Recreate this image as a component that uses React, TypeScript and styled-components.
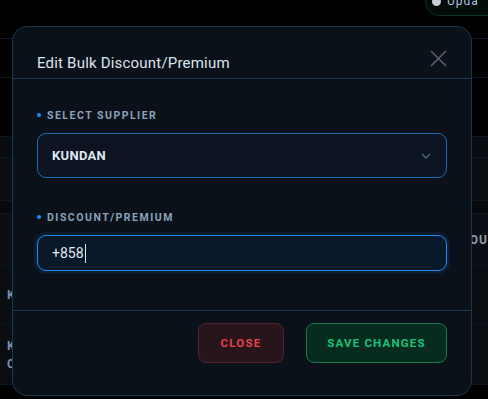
import * as React from "react"
import styled, { createGlobalStyle } from "styled-components"

const GlobalStyle = createGlobalStyle`
  html, body {
    margin: 0;
    padding: 0;
    background: #000;
    font-family: Roboto, "Liberation Sans", sans-serif;
  }
  * { box-sizing: border-box; }
`

const Page = styled.div`
  position: relative;
  width: 488px;
  height: 399px;
  overflow: hidden;
  background: #000;
`

const TopBar = styled.div`
  height: 39px;
  border-bottom: 1px solid #0d1b29;
  display: flex;
  justify-content: flex-end;
  align-items: flex-start;
  overflow: hidden;
`

const StatusPill = styled.div`
  flex: none;
  width: 92px;
  margin-top: -12px;
  margin-right: -29px;
  height: 28px;
  padding: 0 0 7px 6px;
  display: flex;
  align-items: flex-end;
  gap: 6px;
  border: 1px solid #0f3322;
  border-radius: 14px;
  background: #030c08;
  color: #a6c4e2;
  font-size: 12px;
  letter-spacing: 1px;
  white-space: nowrap;
`

const PillDot = styled.span`
  width: 9px;
  height: 9px;
  margin-bottom: 2px;
  border-radius: 50%;
  background: #c8ced6;
`

const SubBar = styled.div`
  height: 39px;
  border-bottom: 1px solid #0d1b29;
`

const Gap = styled.div<{ $h: number; $bg?: string }>`
  height: ${p => p.$h}px;
  background: ${p => p.$bg || "#000"};
  border-bottom: 1px solid #0d1722;
`

const TableRow = styled.div<{ $h: number; $bg: string }>`
  height: ${p => p.$h}px;
  background: ${p => p.$bg};
  border-bottom: 1px solid #0d1722;
  display: flex;
  flex-direction: column;
  justify-content: center;
  padding-left: 7px;
  color: #7c92a6;
  font-size: 12px;
  font-weight: 700;
  line-height: 18px;
`

const HeadRow = styled.div`
  height: 52px;
  background: #0b0f15;
  border-bottom: 1px solid #0d1722;
  display: flex;
  justify-content: flex-end;
  align-items: center;
  color: #8a9cae;
  font-size: 12px;
  font-weight: 700;
  letter-spacing: 1px;
`

const Modal = styled.div`
  position: absolute;
  left: 12px;
  top: 26px;
  width: 460px;
  height: 370px;
  background: #0a1119;
  border: 1px solid #1c3550;
  border-radius: 15px;
  display: flex;
  flex-direction: column;
  overflow: hidden;
`

const Header = styled.div`
  height: 52px;
  padding: 20px 24px 0;
  border-bottom: 1px solid #1c3550;
  display: flex;
  align-items: center;
  justify-content: space-between;
`

const Title = styled.h2`
  margin: 0;
  font-size: 15px;
  font-weight: 400;
  color: #dbe4ee;
  letter-spacing: 0.2px;
`

const CloseIcon = styled.button`
  width: 17px;
  height: 17px;
  padding: 0;
  margin-top: -8px;
  border: none;
  background: none;
  display: flex;
`

const Body = styled.div`
  padding: 28px 24px 0;
  height: 232px;
  border-bottom: 1px solid #1c3550;
`

const Field = styled.div`
  display: flex;
  flex-direction: column;
  margin-bottom: 31px;
`

const Label = styled.label`
  display: flex;
  align-items: center;
  gap: 6px;
  height: 16px;
  margin-bottom: 10px;
  font-size: 10.5px;
  font-weight: 700;
  letter-spacing: 1.5px;
  color: #8aa2ba;
  &::before {
    content: "";
    width: 4px;
    height: 4px;
    border-radius: 50%;
    background: #1e8cff;
  }
`

const SelectBox = styled.div`
  height: 45px;
  border: 1px solid #1d69b8;
  border-radius: 9px;
  background: #0b1420;
  display: flex;
  align-items: center;
  justify-content: space-between;
  padding: 0 14px;
  color: #dfe8f2;
  font-size: 13px;
  font-weight: 700;
  letter-spacing: 0.3px;
`

const InputBox = styled.div`
  height: 36px;
  border: 1px solid #1f8bf0;
  border-radius: 9px;
  background: #081829;
  box-shadow: 0 0 0 3px rgba(30, 120, 220, 0.12);
  display: flex;
  align-items: center;
  padding: 0 14px;
  color: #e2eaf2;
  font-size: 14px;
`

const Caret = styled.span`
  width: 1px;
  height: 19px;
  margin-left: 1px;
  background: #e2eaf2;
`

const Footer = styled.div`
  flex: 1;
  display: flex;
  justify-content: flex-end;
  align-items: flex-start;
  gap: 22px;
  padding: 12px 24px 0;
`

const Btn = styled.button<{ $tone: "red" | "green" }>`
  height: 40px;
  width: ${p => (p.$tone === "red" ? 86 : 141)}px;
  padding: 0;
  border-radius: 8px;
  font-family: inherit;
  font-size: 11.5px;
  font-weight: 700;
  letter-spacing: 1.2px;
  border: 1px solid ${p => (p.$tone === "red" ? "#55202d" : "#137a4d")};
  background: ${p => (p.$tone === "red" ? "#28151c" : "#082b20")};
  color: ${p => (p.$tone === "red" ? "#e5404f" : "#18c47b")};
`

export default function App() {
  return (
    <>
      <GlobalStyle />
      <Page>
        <TopBar>
          <StatusPill>
            <PillDot />
            Upda
          </StatusPill>
        </TopBar>
        <SubBar />
        <Gap $h={59} />
        <Gap $h={21} $bg="#080b10" />
        <Gap $h={43} $bg="#0a0d12" />
        <Gap $h={13} $bg="#07090d" />
        <HeadRow>COU</HeadRow>
        <TableRow $h={59} $bg="#0a0d12">K</TableRow>
        <TableRow $h={60} $bg="#0a0d12">
          <span>K</span>
          <span>C</span>
        </TableRow>

        <Modal>
          <Header>
            <Title>Edit Bulk Discount/Premium</Title>
            <CloseIcon aria-label="close">
              <svg width="17" height="17" viewBox="0 0 17 17">
                <path d="M1 1L16 16M16 1L1 16" stroke="#56616d" strokeWidth="1.6" fill="none" />
              </svg>
            </CloseIcon>
          </Header>
          <Body>
            <Field>
              <Label>SELECT SUPPLIER</Label>
              <SelectBox>
                KUNDAN
                <svg width="12" height="12" viewBox="0 0 12 12">
                  <path d="M2 4L6 8L10 4" stroke="#4f6378" strokeWidth="1.4" fill="none" />
                </svg>
              </SelectBox>
            </Field>
            <Field>
              <Label>DISCOUNT/PREMIUM</Label>
              <InputBox>
                +858
                <Caret />
              </InputBox>
            </Field>
          </Body>
          <Footer>
            <Btn $tone="red">CLOSE</Btn>
            <Btn $tone="green">SAVE CHANGES</Btn>
          </Footer>
        </Modal>
      </Page>
    </>
  )
}
